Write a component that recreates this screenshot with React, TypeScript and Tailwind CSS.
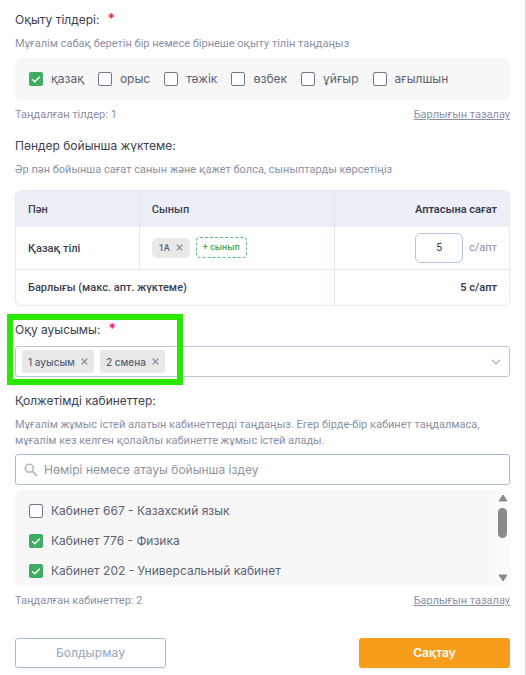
import { useState } from "react";
import type { ReactNode } from "react";

const LANGUAGES = ["қазақ", "орыс", "тәжік", "өзбек", "ұйғыр", "ағылшын"];

const ROOMS = [
  "Кабинет 667 - Казахский язык",
  "Кабинет 776 - Физика",
  "Кабинет 202 - Универсальный кабинет",
];

const SHIFTS = ["1 ауысым", "2 смена"];

function toggle(list: string[], item: string) {
  return list.includes(item) ? list.filter((i) => i !== item) : [...list, item];
}

function Cross({ className }: { className: string }) {
  return (
    <svg viewBox="0 0 10 10" className={className} fill="none" stroke="currentColor" strokeWidth="1.6" aria-hidden="true">
      <path d="M1 1l8 8M9 1l-8 8" />
    </svg>
  );
}

function Checkbox({ label, checked, onChange }: { label: string; checked: boolean; onChange: () => void }) {
  return (
    <label className="flex items-center gap-2 font-['Inter','Noto_Sans',sans-serif] text-xs leading-5 text-[#5b6274]">
      <span className="grid">
        <input
          type="checkbox"
          checked={checked}
          onChange={onChange}
          className="peer col-start-1 row-start-1 size-3.5 appearance-none rounded-[2px] border border-[#6f788c] bg-white checked:border-[#3fac62] checked:bg-[#3fac62]"
        />
        <svg
          viewBox="0 0 14 14"
          className="pointer-events-none invisible col-start-1 row-start-1 size-3.5 peer-checked:visible"
          fill="none"
          stroke="#fff"
          strokeWidth="1.4"
          aria-hidden="true"
        >
          <path d="M3.2 7.2l2.6 2.5 5-5" />
        </svg>
      </span>
      {label}
    </label>
  );
}

function Hint({ children }: { children: ReactNode }) {
  return <p className="mt-1.5 text-[11px] leading-4 text-[#8b90a7]">{children}</p>;
}

function Required() {
  return <span className="ml-2 text-sm leading-none font-semibold text-[#ff1464]">*</span>;
}

function Summary({ text, onClear }: { text: string; onClear: () => void }) {
  return (
    <div className="mt-[7px] flex justify-between text-[11px] leading-4 text-[#8b90a7]">
      <span>{text}</span>
      <button type="button" onClick={onClear} className="underline underline-offset-1">
        Барлығын тазалау
      </button>
    </div>
  );
}

export default function App() {
  const [languages, setLanguages] = useState(["қазақ"]);
  const [rooms, setRooms] = useState(ROOMS.slice(1));
  const [shifts, setShifts] = useState(SHIFTS);
  const [classes, setClasses] = useState(["1А"]);
  const [hours, setHours] = useState("5");

  return (
    <form
      className="min-h-screen border-r border-[#d4d6da] bg-white px-[15px] pt-2.5 pb-[7px] font-['Roboto','Noto_Sans',sans-serif] text-[#3b4152]"
      onSubmit={(e) => e.preventDefault()}
    >
      <fieldset>
        <legend className="font-['Inter','Noto_Sans',sans-serif] text-xs leading-5">
          Оқыту тілдері:
          <Required />
        </legend>
        <Hint>Мұғалім сабақ беретін бір немесе бірнеше оқыту тілін таңдаңыз</Hint>
        <div className="mt-1.5 flex h-[42px] items-center gap-3.5 rounded-md bg-[#f7f7f7] px-3.5">
          {LANGUAGES.map((name) => (
            <Checkbox
              key={name}
              label={name}
              checked={languages.includes(name)}
              onChange={() => setLanguages(toggle(languages, name))}
            />
          ))}
        </div>
        <Summary text={`Таңдалған тілдер: ${languages.length}`} onClear={() => setLanguages([])} />
      </fieldset>

      <section className="mt-[13px]">
        <h2 className="font-['Inter','Noto_Sans',sans-serif] text-xs leading-5">Пәндер бойынша жүктеме:</h2>
        <Hint>Әр пән бойынша сағат санын және қажет болса, сыныптарды көрсетіңіз</Hint>
        <div className="mt-3 overflow-hidden rounded-md border border-[#e6eaee]">
          <table className="w-full table-fixed text-[11px] leading-4">
            <thead>
              <tr className="h-9 bg-[#eceff5] text-left">
                <th className="w-1/4 border-r border-[#dfe4ea] px-3 pt-0.5 font-medium">Пән</th>
                <th className="border-r border-[#dfe4ea] px-3 pt-0.5 font-medium">Сынып</th>
                <th className="w-[35.5%] px-3 pt-0.5 text-right font-semibold">Аптасына сағат</th>
              </tr>
            </thead>
            <tbody>
              <tr className="h-[42px] border-b border-[#e0e6ec]">
                <td className="border-r border-[#e0e6ec] px-3 pt-0.5 font-medium">Қазақ тілі</td>
                <td className="border-r border-[#e0e6ec] px-3">
                  <div className="flex items-center gap-1.5">
                    {classes.map((name) => (
                      <span
                        key={name}
                        className="flex h-5 items-center gap-1.5 rounded-md bg-[#e8e8e8] px-[7px] text-[9px] font-medium text-[#5b6274]"
                      >
                        {name}
                        <button type="button" aria-label={`${name} өшіру`} onClick={() => setClasses(toggle(classes, name))}>
                          <Cross className="size-[7px] text-[#7d8499]" />
                        </button>
                      </span>
                    ))}
                    <button
                      type="button"
                      className="h-[21px] rounded-[4px] border border-dashed border-[#5dbb7b] px-1.5 text-[9px] leading-none font-medium text-[#3fac62]"
                    >
                      + сынып
                    </button>
                  </div>
                </td>
                <td className="px-3">
                  <label className="flex items-center justify-end gap-1.5 text-[#8b90a7]">
                    <input
                      type="text"
                      inputMode="numeric"
                      value={hours}
                      onChange={(e) => setHours(e.target.value)}
                      className="h-[30px] w-12 rounded-md border border-[#b4c5d6] bg-white text-center text-[#3b4152]"
                    />
                    с/апт
                  </label>
                </td>
              </tr>
              <tr className="h-9">
                <td colSpan={2} className="border-r border-[#e0e6ec] px-3 pt-0.5 font-medium">
                  Барлығы (макс. апт. жүктеме)
                </td>
                <td className="px-3 pt-0.5 text-right font-semibold">{hours} с/апт</td>
              </tr>
            </tbody>
          </table>
        </div>
      </section>

      <section className="relative mt-3.5">
        <label htmlFor="shift" className="block font-['Inter','Noto_Sans',sans-serif] text-xs leading-5">
          Оқу ауысымы:
          <Required />
        </label>
        <div className="mt-1.5 flex h-[31px] items-center gap-1.5 rounded-[3px] border border-[#bcc6d2] pr-2 pl-1.5">
          {shifts.map((name) => (
            <span
              key={name}
              className="flex h-[23px] items-center gap-1.5 rounded-[3px] bg-[#e8e8e8] px-1.5 font-['Inter','Noto_Sans',sans-serif] text-[10px] leading-4 font-medium text-[#5b6274]"
            >
              {name}
              <button type="button" aria-label={`${name} өшіру`} onClick={() => setShifts(toggle(shifts, name))}>
                <Cross className="size-[7px] text-[#7d8499]" />
              </button>
            </span>
          ))}
          <input id="shift" role="combobox" aria-expanded="false" className="min-w-0 flex-1 text-xs outline-none" />
          <svg viewBox="0 0 10 10" className="size-2.5 text-[#a5b9ca]" fill="none" stroke="currentColor" strokeWidth="1.4" aria-hidden="true">
            <path d="M1 3l4 4 4-4" />
          </svg>
        </div>
        {/* highlight frame around the shift picker */}
        <div className="pointer-events-none absolute -top-1.5 -bottom-2 -left-2 w-44 border-6 border-[#2ae800]" />
      </section>

      <fieldset className="mt-3.5">
        <legend className="font-['Inter','Noto_Sans',sans-serif] text-xs leading-5">Қолжетімді кабинеттер:</legend>
        <Hint>
          Мұғалім жұмыс істей алатын кабинеттерді таңдаңыз. Егер бірде-бір кабинет таңдалмаса, мұғалім кез келген қолайлы
          кабинетте жұмыс істей алады.
        </Hint>
        <label className="mt-[5px] flex h-[31px] items-center gap-1.5 rounded-[3px] border border-[#a9bccd] px-2">
          <svg viewBox="0 0 14 14" className="size-3.5 text-[#b0b3c2]" fill="none" stroke="currentColor" strokeWidth="1.6" aria-hidden="true">
            <circle cx="5.3" cy="5.3" r="4" />
            <path d="M8.3 8.3l4.6 4.6" />
          </svg>
          <input
            type="search"
            aria-label="Кабинет іздеу"
            placeholder="Нөмірі немесе атауы бойынша іздеу"
            className="min-w-0 flex-1 font-['Inter','Noto_Sans',sans-serif] text-xs leading-5 outline-none placeholder:text-[#8f959f]"
          />
        </label>
        <div className="mt-[5px] flex h-24 overflow-hidden rounded-md bg-[#f7f7f7]">
          <div className="flex flex-1 flex-col gap-2.5 overflow-hidden px-3.5 pt-[11px]">
            {ROOMS.map((name) => (
              <Checkbox
                key={name}
                label={name}
                checked={rooms.includes(name)}
                onChange={() => setRooms(toggle(rooms, name))}
              />
            ))}
          </div>
          <div className="flex w-[15px] flex-col items-center bg-[#fbfbfb] py-1 text-[#8a8a8a]" aria-hidden="true">
            <svg viewBox="0 0 10 8" className="h-2 w-2.5" fill="currentColor" stroke="currentColor" strokeLinejoin="round">
              <path d="M5 1l4 6H1z" />
            </svg>
            <div className="mt-1.5 h-[30px] w-[9px] rounded-full bg-[#8a8a8a]" />
            <svg viewBox="0 0 10 8" className="mt-auto h-2 w-2.5" fill="currentColor" stroke="currentColor" strokeLinejoin="round">
              <path d="M5 7L1 1h8z" />
            </svg>
          </div>
        </div>
        <Summary text={`Таңдалған кабинеттер: ${rooms.length}`} onClear={() => setRooms([])} />
      </fieldset>

      <div className="mt-[29px] flex justify-between font-['Inter','Noto_Sans',sans-serif] text-xs leading-5 font-medium">
        <button type="button" className="h-[30px] w-[151px] rounded-[3px] border border-[#a9bccd] text-[#9db2c4] shadow-xs">
          Болдырмау
        </button>
        <button type="submit" className="h-[30px] w-[151px] rounded-[3px] bg-[#f89c1c] font-semibold text-white shadow-xs">
          Сақтау
        </button>
      </div>
    </form>
  );
}
